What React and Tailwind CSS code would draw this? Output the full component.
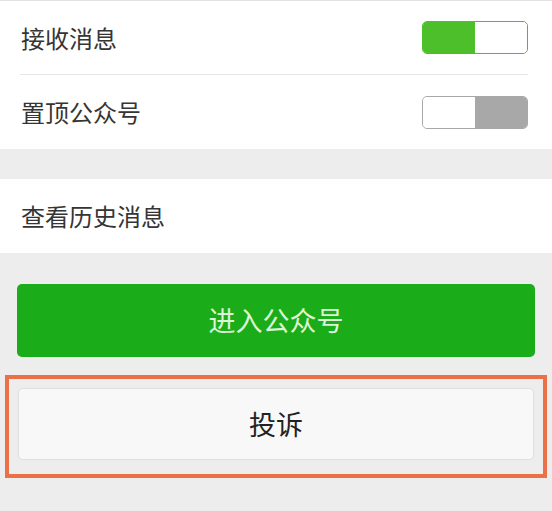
import React, { useState } from 'react';

const FONT = { fontFamily: '"Noto Sans CJK SC", "Noto Sans", sans-serif' };

function Toggle({ on, onClick }) {
  return (
    <button
      onClick={onClick}
      className={`flex w-[106px] h-[33px] rounded-[5px] border overflow-hidden ${
        on ? 'border-[#4cbf2a]' : 'border-[#a8a8a8]'
      }`}
    >
      {on ? (
        <>
          <span className="w-1/2 h-full bg-[#4cbf2a]" />
          <span className="w-1/2 h-full bg-white rounded-[4px]" />
        </>
      ) : (
        <>
          <span className="w-1/2 h-full bg-white rounded-[4px]" />
          <span className="w-1/2 h-full bg-[#a8a8a8]" />
        </>
      )}
    </button>
  );
}

export default function App() {
  const [recv, setRecv] = useState(true);
  const [pin, setPin] = useState(false);

  return (
    <div className="w-[552px] h-[511px] bg-[#ededed] overflow-hidden text-[#353535]" style={FONT}>
      {/* Switch group */}
      <div className="bg-white border-t border-[#e2e2e2]">
        <div className="h-[73px] flex items-center justify-between pl-[21px] pr-[24px]">
          <span className="text-[24px] leading-none">接收消息</span>
          <Toggle on={recv} onClick={() => setRecv(!recv)} />
        </div>
        <div className="ml-[20px] mr-[24px] h-px bg-[#e6e6e6]" />
        <div className="h-[74px] flex items-center justify-between pl-[21px] pr-[24px]">
          <span className="text-[24px] leading-none">置顶公众号</span>
          <Toggle on={pin} onClick={() => setPin(!pin)} />
        </div>
      </div>

      {/* History */}
      <div className="mt-[30px] bg-white h-[74px] flex items-center pl-[21px]">
        <span className="text-[24px] leading-none">查看历史消息</span>
      </div>

      {/* Buttons */}
      <div className="pt-[31px] px-[17px]">
        <button className="w-full h-[73px] rounded-[5px] bg-[#1aad19] text-[#dcf5d6] text-[27px]">
          进入公众号
        </button>
      </div>

      <div className="mt-[18px] mx-[5px] border-[4px] border-[#ec7047] px-[9px] pt-[9px] pb-[14px]">
        <button className="w-full h-[72px] rounded-[4px] bg-[#f8f8f8] border border-[#dedede] text-[#222] text-[27px]">
          投诉
        </button>
      </div>
    </div>
  );
}
